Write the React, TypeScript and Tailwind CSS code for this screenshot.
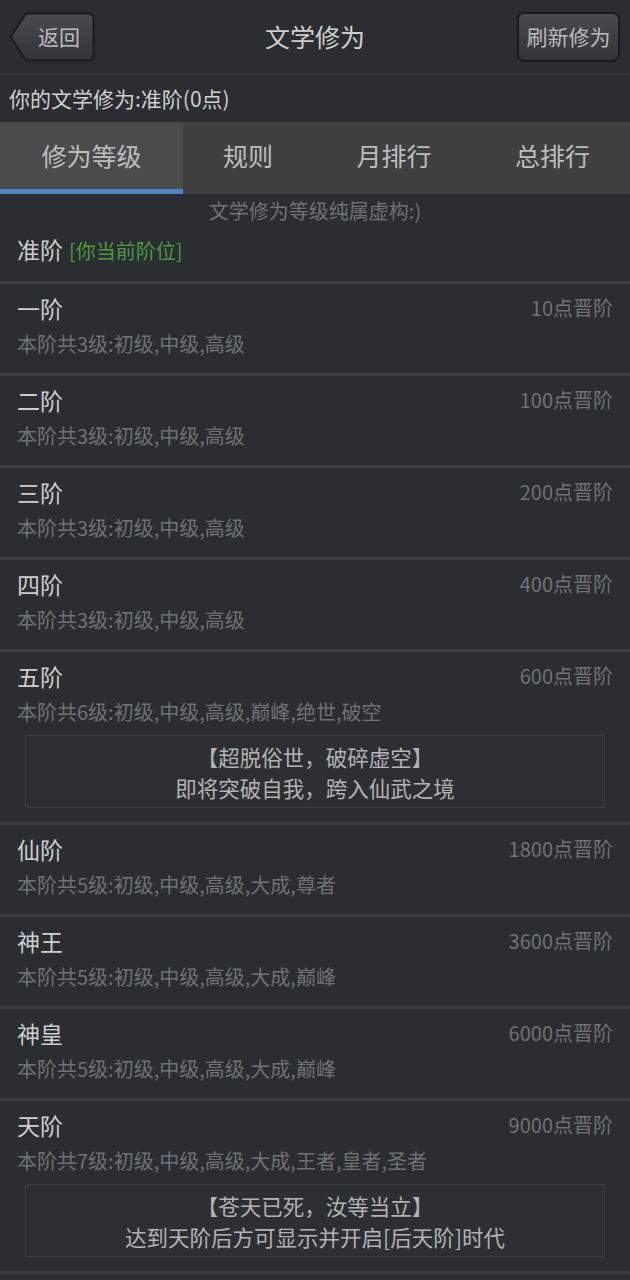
import React from "react";

type Rank = {
  name: string;
  points: string;
  levels: string;
  note?: [string, string];
};

const ranks: Rank[] = [
  { name: "一阶", points: "10点晋阶", levels: "本阶共3级:初级,中级,高级" },
  { name: "二阶", points: "100点晋阶", levels: "本阶共3级:初级,中级,高级" },
  { name: "三阶", points: "200点晋阶", levels: "本阶共3级:初级,中级,高级" },
  { name: "四阶", points: "400点晋阶", levels: "本阶共3级:初级,中级,高级" },
  {
    name: "五阶",
    points: "600点晋阶",
    levels: "本阶共6级:初级,中级,高级,巅峰,绝世,破空",
    note: ["【超脱俗世，破碎虚空】", "即将突破自我，跨入仙武之境"],
  },
  { name: "仙阶", points: "1800点晋阶", levels: "本阶共5级:初级,中级,高级,大成,尊者" },
  { name: "神王", points: "3600点晋阶", levels: "本阶共5级:初级,中级,高级,大成,巅峰" },
  { name: "神皇", points: "6000点晋阶", levels: "本阶共5级:初级,中级,高级,大成,巅峰" },
  {
    name: "天阶",
    points: "9000点晋阶",
    levels: "本阶共7级:初级,中级,高级,大成,王者,皇者,圣者",
    note: ["【苍天已死，汝等当立】", "达到天阶后方可显示并开启[后天阶]时代"],
  },
];

const BackButton = () => (
  <button className="relative w-[86px] h-[50px] flex items-center justify-center pl-[14px]">
    <svg className="absolute inset-0" width="86" height="50" viewBox="0 0 86 50">
      <defs>
        <linearGradient id="bb" x1="0" y1="0" x2="0" y2="1">
          <stop offset="0" stopColor="#484b4f" />
          <stop offset="1" stopColor="#303337" />
        </linearGradient>
      </defs>
      <path
        d="M17 1.5 H79 Q84.5 1.5 84.5 7 V43 Q84.5 48.5 79 48.5 H17 L1.5 25 Z"
        fill="url(#bb)"
        stroke="#1a1b1e"
        strokeWidth="2"
      />
    </svg>
    <span className="relative text-[21px] leading-none text-[#bcbcbc]">返回</span>
  </button>
);

const RankRow = ({ r }: { r: Rank }) => (
  <div
    className={
      r.note
        ? "border-t-[3px] border-[#3a3d41] px-[17px] pt-[6px] pb-[14px]"
        : "border-t-[3px] border-[#3a3d41] px-[17px] pt-[6px] pb-[11px]"
    }
  >
    <div className="flex justify-between items-start">
      <div className="flex flex-col">
        <span className="text-[23px] leading-[36px] text-[#cdcdcd]">{r.name}</span>
        <span className="text-[20px] leading-[36px] text-[#6e7276]">{r.levels}</span>
      </div>
      <span className="text-[20px] leading-[36px] text-[#6e7276]">{r.points}</span>
    </div>
    {r.note && (
      <div className="mx-[8px] mt-[5px] border border-[#3a3d41] bg-[#2c2f33] h-[73px] flex flex-col items-center justify-center text-[21.5px] leading-[31px] text-[#b3b3b3]">
        <span>{r.note[0]}</span>
        <span>{r.note[1]}</span>
      </div>
    )}
  </div>
);

export default function App() {
  return (
    <div
      className="w-[630px] min-h-[1280px] bg-[#2a2d31] overflow-hidden"
      style={{ fontFamily: '"Noto Sans CJK SC", "Noto Sans", sans-serif' }}
    >
      {/* header */}
      <div className="h-[75px] grid grid-cols-[1fr_auto_1fr] items-center px-[9px] border-b-2 border-[#34373b]">
        <div className="flex">
          <BackButton />
        </div>
        <span className="text-[25px] text-[#cfcfcf] leading-none">文学修为</span>
        <div className="flex justify-end">
          <button className="w-[103px] h-[50px] rounded-[7px] border-2 border-[#1a1b1e] bg-gradient-to-b from-[#484b4f] to-[#313438] text-[21px] leading-none text-[#bcbcbc] mr-[1px]">
            刷新修为
          </button>
        </div>
      </div>

      <div className="h-[47px] flex items-center px-[9px] text-[21px] text-[#cfcfcf]">
        你的文学修为:准阶(0点)
      </div>

      {/* tabs */}
      <div className="flex h-[72px] bg-[#404040] text-[25px] text-[#bdbdbd]">
        <div className="w-[183px] bg-[#4b4b4b] flex flex-col">
          <div className="flex-1 flex items-center justify-center">修为等级</div>
          <div className="h-[5px] bg-[#4a86c8]" />
        </div>
        <div className="w-[130px] flex items-center justify-center pb-[5px]">规则</div>
        <div className="w-[162px] flex items-center justify-center pb-[5px]">月排行</div>
        <div className="flex-1 flex items-center justify-center pb-[5px]">总排行</div>
      </div>

      <div className="h-[87px] flex flex-col">
        <div className="text-center text-[20px] leading-[34px] text-[#6e7276]">文学修为等级纯属虚构:)</div>
        <div className="px-[17px] flex items-baseline gap-[6px] mt-[4px]">
          <span className="text-[23px] text-[#cdcdcd]">准阶</span>
          <span className="text-[20px] text-[#4b9a3c]">[你当前阶位]</span>
        </div>
      </div>

      {ranks.map((r) => (
        <RankRow key={r.name} r={r} />
      ))}
      <div className="border-t-[3px] border-[#3a3d41]" />
    </div>
  );
}
